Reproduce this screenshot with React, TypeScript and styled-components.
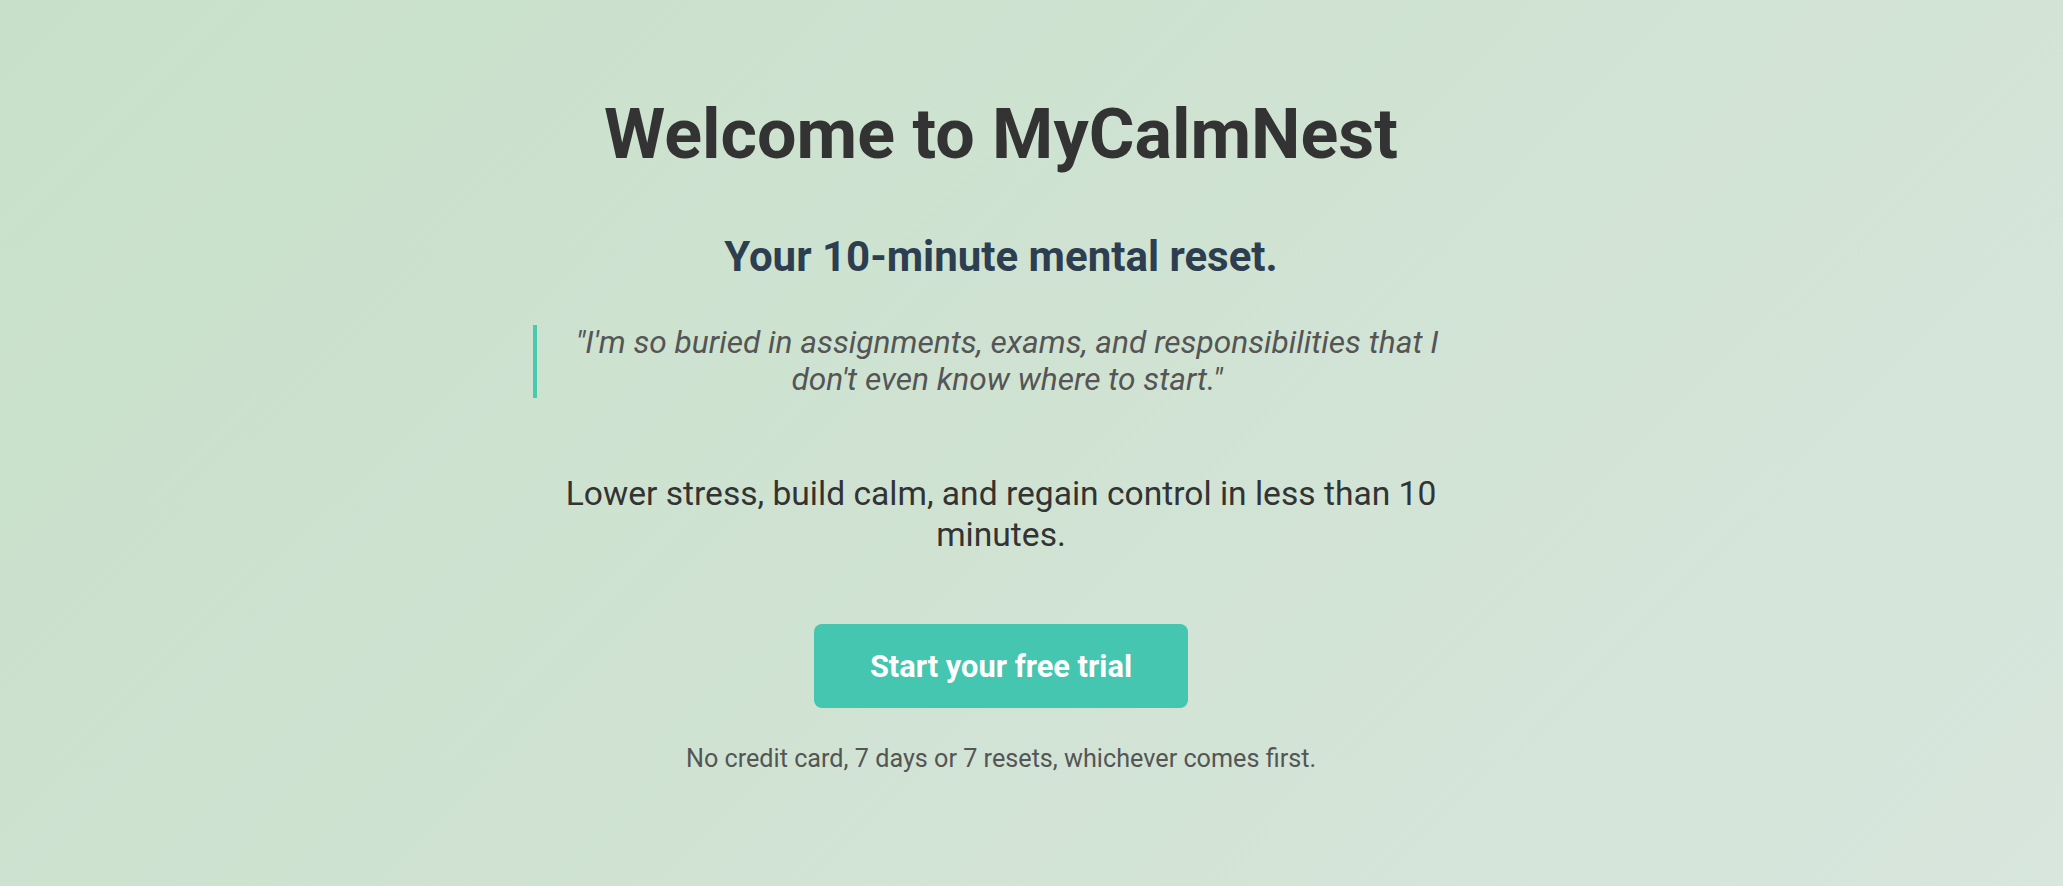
import React from "react";
import styled, { createGlobalStyle } from "styled-components";

const GlobalStyle = createGlobalStyle`
  html, body {
    margin: 0;
    padding: 0;
  }
  body {
    font-family: Roboto, "Liberation Sans", Arial, sans-serif;
    background: linear-gradient(135deg, #c8e0c9 0%, #d8e6dd 100%);
    min-height: 100vh;
  }
  #root {
    min-height: 100vh;
  }
`;

const Page = styled.main`
  min-height: 886px;
  box-sizing: border-box;
  padding: 92px 61px 40px 0;
  display: flex;
  justify-content: center;
`;

const Hero = styled.section`
  width: 1000px;
  display: flex;
  flex-direction: column;
  align-items: center;
  text-align: center;
`;

const Title = styled.h1`
  margin: 0;
  font-size: 70px;
  line-height: 1.2;
  font-weight: 700;
  color: #333333;
`;

const Subtitle = styled.h2`
  margin: 56px 0 0;
  font-size: 42px;
  line-height: 1.2;
  font-weight: 700;
  color: #2c3e50;
`;

const Quote = styled.blockquote`
  margin: 43px 0 0;
  width: 900px;
  padding: 0 12px 0 20px;
  border-left: 4px solid #48c9b0;
  font-size: 31.7px;
  line-height: 36.5px;
  font-style: italic;
  color: #555555;
`;

const Lead = styled.p`
  margin: 76px 0 0;
  width: 900px;
  font-size: 33.6px;
  line-height: 1.2;
  color: #333333;
`;

const CtaButton = styled.button`
  margin-top: 69px;
  width: 374px;
  height: 84px;
  border: none;
  border-radius: 8px;
  background: #45c6b0;
  color: #ffffff;
  font-family: Roboto, "Liberation Sans", Arial, sans-serif;
  font-size: 30.8px;
  font-weight: 700;
  cursor: pointer;
`;

const Note = styled.p`
  margin: 35px 0 0;
  font-size: 25.2px;
  line-height: 1.3;
  color: #555555;
`;

export default function App() {
  return (
    <>
      <GlobalStyle />
      <Page>
        <Hero>
          <Title>Welcome to MyCalmNest</Title>
          <Subtitle>Your 10-minute mental reset.</Subtitle>
          <Quote>
            "I'm so buried in assignments, exams, and responsibilities that I
            don't even know where to start."
          </Quote>
          <Lead>
            Lower stress, build calm, and regain control in less than 10
            minutes.
          </Lead>
          <CtaButton>Start your free trial</CtaButton>
          <Note>No credit card, 7 days or 7 resets, whichever comes first.</Note>
        </Hero>
      </Page>
    </>
  );
}
